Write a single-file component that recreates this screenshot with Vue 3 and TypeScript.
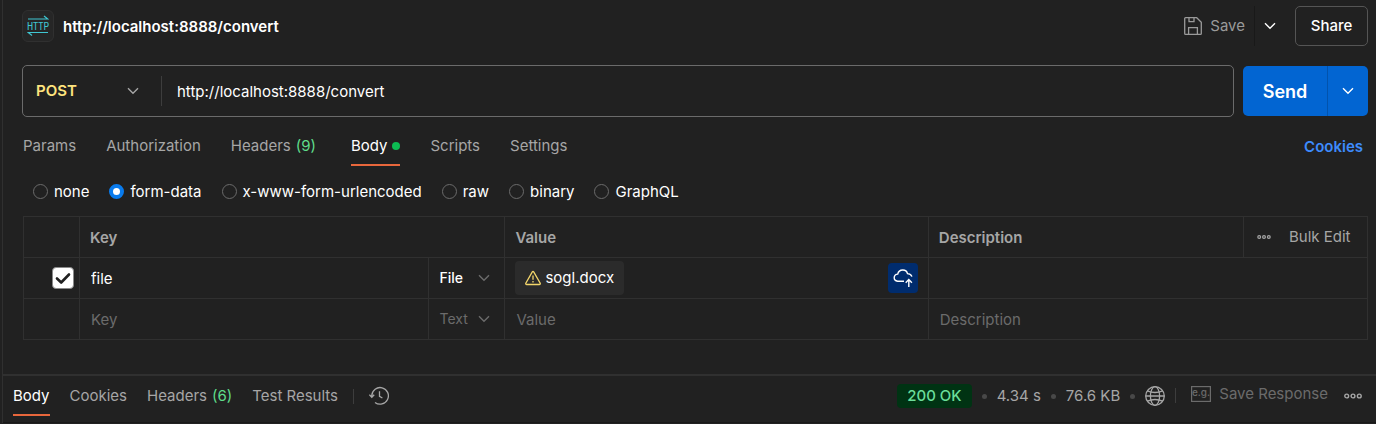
<script setup lang="ts">
import { ref } from 'vue'

interface Tab {
  id: string
  label: string
  count?: number
  dot?: boolean
}

const requestTabs: Tab[] = [
  { id: 'params', label: 'Params' },
  { id: 'auth', label: 'Authorization' },
  { id: 'headers', label: 'Headers', count: 9 },
  { id: 'body', label: 'Body', dot: true },
  { id: 'scripts', label: 'Scripts' },
  { id: 'settings', label: 'Settings' },
]
const responseTabs: Tab[] = [
  { id: 'body', label: 'Body' },
  { id: 'cookies', label: 'Cookies' },
  { id: 'headers', label: 'Headers', count: 6 },
  { id: 'tests', label: 'Test Results' },
]
const bodyModes: string[] = ['none', 'form-data', 'x-www-form-urlencoded', 'raw', 'binary', 'GraphQL']

const requestTab = ref('body')
const responseTab = ref('body')
const bodyMode = ref('form-data')
const method = ref('POST')
const url = ref('http://localhost:8888/convert')
const rowEnabled = ref(true)
const rowKey = ref('file')
const rowType = ref('File')
const rowDescription = ref('')
const newKey = ref('')
const newType = ref('Text')
const newValue = ref('')
const newDescription = ref('')
</script>

<template>
  <main class="workspace">
    <section class="request">
      <header class="title-bar">
        <span class="protocol">
          <svg width="22" height="22" viewBox="0 0 22 22" fill="none" stroke="#3fc6d2" stroke-width="1.2">
            <path d="M1 4H20.8L17 1M21 17.5H1.2L5 20.5" />
            <text x="11" y="14.5" text-anchor="middle" fill="#3fc6d2" stroke="none" class="protocol-text">HTTP</text>
          </svg>
        </span>
        <h1>http://localhost:8888/convert</h1>
        <button class="save" type="button">
          <svg width="18" height="18" viewBox="0 0 18 18" fill="none" stroke="currentColor" stroke-width="1.3">
            <path d="M1.6.7H12.7L17.3 5.3V16.4Q17.3 17.3 16.4 17.3H1.6Q.7 17.3 .7 16.4V1.6Q.7.7 1.6.7ZM5 .7V4.6H10V.7M4.6 17V10.7H13.4V17" />
          </svg>
          Save
        </button>
        <button class="save-more" type="button" aria-label="Save options">
          <svg class="chevron" viewBox="0 0 12 8"><path d="M1 1.2L6 6.2L11 1.2" /></svg>
        </button>
        <button class="share" type="button">Share</button>
      </header>

      <form class="url-row" @submit.prevent>
        <div class="url-box">
          <span class="select method">
            <select v-model="method" aria-label="Method">
              <option>POST</option>
              <option>GET</option>
            </select>
            <svg class="chevron" viewBox="0 0 12 8"><path d="M1 1.2L6 6.2L11 1.2" /></svg>
          </span>
          <input v-model="url" class="url" type="text" aria-label="Request URL" />
        </div>
        <div class="send-group">
          <button class="send" type="submit">Send</button>
          <button class="send-more" type="button" aria-label="Send options">
            <svg class="chevron" viewBox="0 0 12 8"><path d="M1 1.2L6 6.2L11 1.2" /></svg>
          </button>
        </div>
      </form>

      <nav class="tabs request-tabs">
        <button
          v-for="tab in requestTabs"
          :key="tab.id"
          type="button"
          :class="{ active: requestTab === tab.id }"
          @click="requestTab = tab.id"
        >
          {{ tab.label }}
          <span v-if="tab.count" class="count">({{ tab.count }})</span>
          <span v-if="tab.dot" class="dot"></span>
        </button>
        <a class="cookies" href="#cookies">Cookies</a>
      </nav>

      <div class="modes" role="radiogroup" aria-label="Body type">
        <label v-for="mode in bodyModes" :key="mode">
          <input v-model="bodyMode" type="radio" name="mode" :value="mode" />
          {{ mode }}
        </label>
      </div>

      <table>
        <colgroup>
          <col class="c-check" />
          <col class="c-key" />
          <col class="c-type" />
          <col class="c-value" />
          <col />
          <col class="c-bulk" />
        </colgroup>
        <thead>
          <tr>
            <th></th>
            <th colspan="2">Key</th>
            <th>Value</th>
            <th>Description</th>
            <th class="actions">
              <div class="bulk">
                <button type="button" aria-label="Column options">
                  <svg width="14" height="6" viewBox="0 0 14 6" fill="none" stroke="currentColor" stroke-width="1.2">
                    <circle cx="2.2" cy="3" r="1.4" /><circle cx="7" cy="3" r="1.4" /><circle cx="11.8" cy="3" r="1.4" />
                  </svg>
                </button>
                <button type="button">Bulk Edit</button>
              </div>
            </th>
          </tr>
        </thead>
        <tbody>
          <tr>
            <td>
              <div class="check">
                <input id="row-enabled" v-model="rowEnabled" type="checkbox" aria-label="Include row" />
                <svg viewBox="0 0 22 22"><path d="M5 11.5L9.2 15.5L17 7.5" /></svg>
              </div>
            </td>
            <td><input v-model="rowKey" class="cell" type="text" placeholder="Key" aria-label="Key" /></td>
            <td>
              <span class="select type">
                <select v-model="rowType" aria-label="Value type">
                  <option>File</option>
                  <option>Text</option>
                </select>
                <svg class="chevron" viewBox="0 0 12 8"><path d="M1 1.2L6 6.2L11 1.2" /></svg>
              </span>
            </td>
            <td>
              <div class="file-cell">
                <span class="file">
                  <svg width="16" height="16" viewBox="0 0 16 16" fill="none" stroke="#f3d66b" stroke-width="1.3">
                    <path d="M7.3 1.9Q8 .9 8.7 1.9L15.2 13.2Q15.5 14.5 14.3 14.5H1.7Q.5 14.5 .8 13.2ZM8 5.5V9.7M8 11V12.5" />
                  </svg>
                  sogl.docx
                </span>
                <button class="upload" type="button" aria-label="Upload file">
                  <svg width="20" height="20" viewBox="0 0 20 20" fill="none" stroke="currentColor" stroke-width="1.4">
                    <path d="M11 13.2H4.6C-.2 12.6 .3 6.4 4.7 6.1C6 .8 13.3 .8 14.5 5.6C16.8 5.7 18.3 6.8 18.9 8.6M15.8 19V11.8M12.7 14.7L15.8 11.6L18.9 14.7" />
                  </svg>
                </button>
              </div>
            </td>
            <td colspan="2"><input v-model="rowDescription" class="cell" type="text" aria-label="Description" /></td>
          </tr>
          <tr>
            <td></td>
            <td><input v-model="newKey" class="cell" type="text" placeholder="Key" aria-label="New key" /></td>
            <td>
              <span class="select type muted">
                <select v-model="newType" aria-label="New value type">
                  <option>Text</option>
                  <option>File</option>
                </select>
                <svg class="chevron" viewBox="0 0 12 8"><path d="M1 1.2L6 6.2L11 1.2" /></svg>
              </span>
            </td>
            <td><input v-model="newValue" class="cell" type="text" placeholder="Value" aria-label="New value" /></td>
            <td colspan="2">
              <input v-model="newDescription" class="cell" type="text" placeholder="Description" aria-label="New description" />
            </td>
          </tr>
        </tbody>
      </table>
    </section>

    <section class="response">
      <nav class="tabs response-tabs">
        <button
          v-for="tab in responseTabs"
          :key="tab.id"
          type="button"
          :class="{ active: responseTab === tab.id }"
          @click="responseTab = tab.id"
        >
          {{ tab.label }}
          <span v-if="tab.count" class="count">({{ tab.count }})</span>
        </button>
      </nav>
      <span class="rule"></span>
      <button class="history" type="button" aria-label="Response history">
        <svg width="20" height="20" viewBox="0 0 20 20" fill="none" stroke="currentColor" stroke-width="1.3">
          <path d="M2.8 10.8V9.5A8.3 8.3 0 1 1 6 16.4M.4 8.7L2.8 11.2L5.2 8.7M10.5 5.2V10.4L13.4 12" />
        </svg>
      </button>
      <div class="meta">
        <span class="status">200 OK</span>
        <span class="bullet"></span>
        <span>4.34 s</span>
        <span class="bullet"></span>
        <span>76.6 KB</span>
        <span class="bullet"></span>
        <button type="button" aria-label="Network">
          <svg width="20" height="20" viewBox="0 0 20 20" fill="none" stroke="currentColor" stroke-width="1.3">
            <circle cx="10" cy="10" r="9.3" />
            <ellipse cx="10" cy="10" rx="4.6" ry="9.3" />
            <path d="M2.3 4.8Q10 8.2 17.7 4.8M.7 10H19.3M2.3 15.2Q10 11.8 17.7 15.2" />
          </svg>
        </button>
        <span class="rule"></span>
        <button class="save-response" type="button">
          <svg width="20" height="16" viewBox="0 0 20 16" fill="none" stroke="currentColor" stroke-width="1.2">
            <rect x=".6" y=".6" width="18.8" height="14.8" />
            <text x="10" y="10" text-anchor="middle" fill="currentColor" stroke="none" class="example-text">e.g.</text>
          </svg>
          Save Response
        </button>
        <button class="more" type="button" aria-label="More actions">
          <svg width="18" height="8" viewBox="0 0 18 8" fill="none" stroke="currentColor" stroke-width="1.4">
            <circle cx="2.7" cy="4" r="1.9" /><circle cx="9" cy="4" r="1.9" /><circle cx="15.3" cy="4" r="1.9" />
          </svg>
        </button>
      </div>
    </section>
  </main>
</template>

<style>
body {
  margin: 0;
  background: #212121;
}
</style>

<style scoped>
.workspace,
.workspace * {
  box-sizing: border-box;
}
.workspace {
  margin-left: 2px;
  border-left: 1px solid #303030;
  color: #fff;
  font: 400 15px/20px Inter, "Liberation Sans", sans-serif;
}
button,
input,
select {
  margin: 0;
  padding: 0;
  border: 0;
  background: none;
  color: inherit;
  font: inherit;
}
svg {
  display: block;
  flex: none;
}
.chevron {
  width: 12px;
  height: 8px;
  fill: none;
  stroke: currentColor;
  stroke-width: 1.4;
}
.request {
  padding: 6px 8px 34px 19px;
}
.title-bar {
  display: flex;
  align-items: center;
  height: 40px;
}
.protocol {
  display: grid;
  place-items: center;
  width: 32px;
  height: 32px;
  border: 1px solid #303030;
  border-radius: 6px;
  background: #262626;
}
.protocol-text {
  font: 400 10px "Liberation Sans Narrow", "Roboto Condensed", Roboto, sans-serif;
}
h1 {
  flex: 1;
  margin: 0 0 0 9px;
  padding-top: 2px;
  font-size: 15px;
  font-weight: 600;
}
.save {
  display: flex;
  align-items: center;
  gap: 8px;
  height: 40px;
  padding-right: 9px;
  border-right: 1px solid #191919;
  color: #9a9a9a;
}
.save-more {
  display: grid;
  place-items: center;
  width: 30px;
  height: 40px;
  margin-right: 10px;
}
.share {
  width: 73px;
  height: 40px;
  border: 1px solid #555;
  border-radius: 5px;
  font-weight: 500;
}
.url-row {
  display: flex;
  align-items: center;
  gap: 9px;
  margin-top: 19px;
}
.url-box {
  display: flex;
  align-items: center;
  flex: 1;
  height: 52px;
  border: 1px solid #6b6b6b;
  border-radius: 5px;
}
.select {
  display: grid;
  grid-template-columns: 1fr auto;
  align-items: center;
}
.select select {
  grid-area: 1 / 1 / 2 / 3;
  appearance: none;
  width: 100%;
  height: 100%;
}
.select .chevron {
  grid-area: 1 / 2;
  color: #a6a6a6;
  pointer-events: none;
}
.method {
  width: 139px;
  height: 30px;
  padding: 0 22px 0 13px;
  border-right: 1px solid #3d3d3d;
  color: #ffe47e;
  font-weight: 600;
}
.url {
  flex: 1;
  height: 30px;
  padding: 0 15px;
}
.send-group {
  display: flex;
  height: 50px;
  border-radius: 5px;
  overflow: hidden;
  background: #0265d2;
}
.send {
  width: 84px;
  padding-top: 2px;
  font-size: 18px;
  font-weight: 600;
}
.send-more {
  display: grid;
  place-items: center;
  width: 41px;
  border-left: 1px solid #0253ad;
}
.tabs {
  display: flex;
  color: #a6a6a6;
}
.tabs button {
  display: flex;
  align-items: center;
  gap: 5px;
  border-bottom: 2px solid transparent;
}
.tabs .active {
  border-color: #e8673c;
  color: #fff;
}
.count {
  color: #5fdc8a;
}
.dot {
  width: 8px;
  height: 8px;
  border-radius: 50%;
  background: #0cbb52;
}
.request-tabs {
  gap: 30px;
  height: 39px;
  margin-top: 10px;
  padding-left: 1px;
}
.request-tabs .count {
  margin-right: 5px;
}
.cookies {
  align-self: center;
  margin: 0 5px 0 auto;
  color: #3d8bfd;
  font-weight: 600;
  text-decoration: none;
}
.modes {
  display: flex;
  gap: 20px;
  margin: 16px 0 14px 11px;
}
.modes label {
  display: flex;
  align-items: center;
  gap: 6px;
}
.modes input {
  appearance: none;
  width: 15px;
  height: 15px;
  margin-bottom: 2px;
  border: 1px solid #6b6b6b;
  border-radius: 50%;
}
.modes input:checked {
  border: 4px solid #097bed;
  background: #fff;
}
table {
  width: calc(100% - 1px);
  margin-left: 1px;
  border-collapse: collapse;
  table-layout: fixed;
}
.c-check {
  width: 56px;
}
.c-key {
  width: 26%;
}
.c-type {
  width: 76px;
}
.c-value {
  width: 31.5%;
}
.c-bulk {
  width: 124px;
}
th,
td {
  height: 41px;
  padding: 0;
  border: 1px solid #303030;
}
th {
  padding: 2px 10px 0;
  color: #a6a6a6;
  font-weight: 600;
  text-align: left;
}
.actions {
  padding-top: 0;
}
.bulk {
  display: flex;
  align-items: center;
  gap: 18px;
  padding-left: 3px;
  font-weight: 400;
  white-space: nowrap;
}
.check {
  display: grid;
  justify-content: end;
  padding-right: 5px;
}
.check input,
.check svg {
  grid-area: 1 / 1;
  width: 22px;
  height: 22px;
}
.check input {
  appearance: none;
  border: 1px solid #8a8a8a;
  border-radius: 4px;
}
.check input:checked {
  background: #fff;
}
.check svg {
  fill: none;
  stroke: #212121;
  stroke-width: 2.6;
  stroke-linecap: round;
  stroke-linejoin: round;
  pointer-events: none;
}
.check input:not(:checked) + svg {
  visibility: hidden;
}
.cell {
  display: block;
  width: 100%;
  height: 40px;
  padding: 0 11px;
}
.cell::placeholder {
  color: #6b6b6b;
  opacity: 1;
}
.type {
  height: 40px;
  padding: 0 14px 0 10px;
  font-size: 14px;
  font-weight: 500;
}
.type .chevron {
  color: #6b6b6b;
}
.muted {
  color: #6b6b6b;
  font-weight: 400;
}
.file-cell {
  display: flex;
  align-items: center;
  justify-content: space-between;
  padding: 0 10px;
}
.file {
  display: flex;
  align-items: center;
  gap: 4px;
  height: 34px;
  padding: 0 10px;
  border-radius: 4px;
  background: #2b2b2b;
}
.upload {
  display: grid;
  place-items: center;
  width: 30px;
  height: 30px;
  border-radius: 4px;
  background: #002c6e;
}
.response {
  display: flex;
  align-items: center;
  height: 49px;
  padding: 0 14px 6px 10px;
  border-top: 2px solid #303030;
  border-bottom: 1px solid #191919;
  color: #a6a6a6;
}
.response-tabs {
  gap: 20px;
  align-self: stretch;
}
.response-tabs button {
  padding-top: 2px;
}
.rule {
  width: 1px;
  height: 15px;
  background: #3d3d3d;
}
.response-tabs + .rule {
  margin: 0 15px;
}
.meta {
  display: flex;
  align-items: center;
  gap: 10px;
  margin-left: auto;
}
.status {
  padding: 2px 10px;
  border-radius: 4px;
  background: #003313;
  color: #6bdd9a;
  font-weight: 500;
}
.bullet {
  width: 5px;
  height: 5px;
  border-radius: 50%;
  background: #484848;
}
.meta .rule {
  margin-bottom: 2px;
}
.save-response {
  display: flex;
  align-items: center;
  gap: 8px;
  margin: 0 6px 0 5px;
  padding-bottom: 4px;
  color: #6b6b6b;
}
.example-text {
  font: 500 10px Inter, sans-serif;
}
</style>
